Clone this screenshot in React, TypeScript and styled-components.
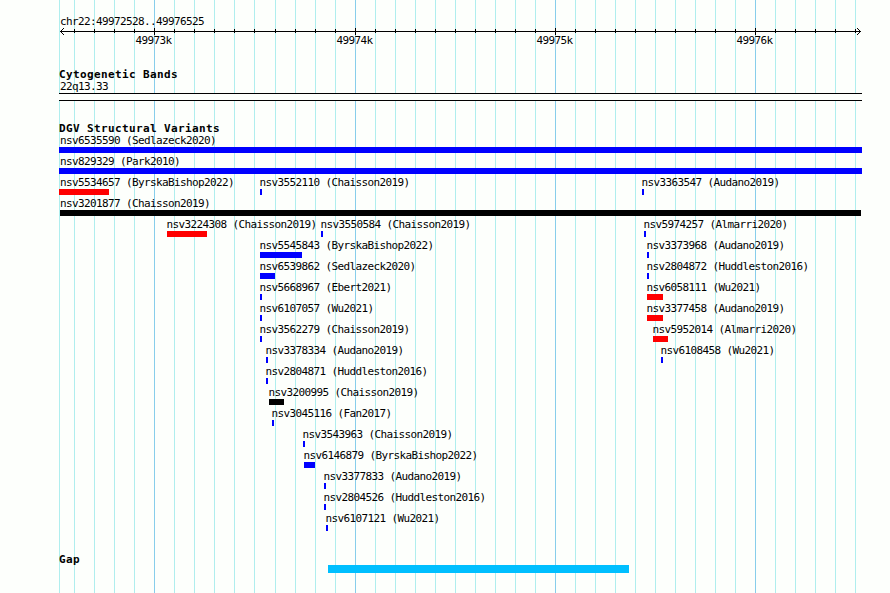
import { Fragment } from 'react';
import styled, { createGlobalStyle } from 'styled-components';

const LEFT = 59;
const WIDTH = 803;

const colors = {
    blue: '#0000ff',
    red: '#ff0000',
    black: '#000000',
    gap: '#00bfff',
};

type Feature = {
    name: string;
    start: number;
    width: number;
    color?: keyof typeof colors;
};

const rows: Feature[][] = [
    [{ name: 'nsv6535590 (Sedlazeck2020)', start: 59, width: 803 }],
    [{ name: 'nsv829329 (Park2010)', start: 59, width: 803 }],
    [
        { name: 'nsv5534657 (ByrskaBishop2022)', start: 59, width: 50, color: 'red' },
        { name: 'nsv3552110 (Chaisson2019)', start: 260, width: 2 },
        { name: 'nsv3363547 (Audano2019)', start: 642, width: 2 },
    ],
    [{ name: 'nsv3201877 (Chaisson2019)', start: 60, width: 801, color: 'black' }],
    [
        { name: 'nsv3224308 (Chaisson2019)', start: 167, width: 40, color: 'red' },
        { name: 'nsv3550584 (Chaisson2019)', start: 321, width: 2 },
        { name: 'nsv5974257 (Almarri2020)', start: 644, width: 2 },
    ],
    [
        { name: 'nsv5545843 (ByrskaBishop2022)', start: 260, width: 42 },
        { name: 'nsv3373968 (Audano2019)', start: 647, width: 2 },
    ],
    [
        { name: 'nsv6539862 (Sedlazeck2020)', start: 260, width: 15 },
        { name: 'nsv2804872 (Huddleston2016)', start: 647, width: 2 },
    ],
    [
        { name: 'nsv5668967 (Ebert2021)', start: 260, width: 2 },
        { name: 'nsv6058111 (Wu2021)', start: 647, width: 16, color: 'red' },
    ],
    [
        { name: 'nsv6107057 (Wu2021)', start: 260, width: 2 },
        { name: 'nsv3377458 (Audano2019)', start: 647, width: 16, color: 'red' },
    ],
    [
        { name: 'nsv3562279 (Chaisson2019)', start: 260, width: 2 },
        { name: 'nsv5952014 (Almarri2020)', start: 653, width: 15, color: 'red' },
    ],
    [
        { name: 'nsv3378334 (Audano2019)', start: 266, width: 2 },
        { name: 'nsv6108458 (Wu2021)', start: 661, width: 2 },
    ],
    [{ name: 'nsv2804871 (Huddleston2016)', start: 266, width: 2 }],
    [{ name: 'nsv3200995 (Chaisson2019)', start: 269, width: 15, color: 'black' }],
    [{ name: 'nsv3045116 (Fan2017)', start: 272, width: 2 }],
    [{ name: 'nsv3543963 (Chaisson2019)', start: 303, width: 2 }],
    [{ name: 'nsv6146879 (ByrskaBishop2022)', start: 304, width: 11 }],
    [{ name: 'nsv3377833 (Audano2019)', start: 324, width: 2 }],
    [{ name: 'nsv2804526 (Huddleston2016)', start: 324, width: 2 }],
    [{ name: 'nsv6107121 (Wu2021)', start: 326, width: 2 }],
];

const majorTicks = [
    { x: 154, label: '49973k' },
    { x: 355, label: '49974k' },
    { x: 555, label: '49975k' },
    { x: 755, label: '49976k' },
];

const ticks = [
    ...Array.from({ length: 10 }, (_, i) => 74 + i * 20),
    ...Array.from({ length: 30 }, (_, i) => 275 + i * 20),
];

const isMajor = (x: number) => majorTicks.some((tick) => tick.x === x);

const GlobalStyle = createGlobalStyle`
    body {
        margin: 0;
        background: #fdfffc;
        overflow: hidden;
    }
`;

const Browser = styled.main`
    position: relative;
    box-sizing: border-box;
    width: 890px;
    height: 593px;
    padding: 15px 28px 0 ${LEFT}px;
    overflow: hidden;
    background: #fdfffc;
    color: #000;
    font-family: 'DejaVu Sans Mono', 'Liberation Mono', monospace;
    font-size: 11px;
    line-height: 13px;
    letter-spacing: -0.622px;
    white-space: pre;
`;

const GridLines = styled.svg`
    position: absolute;
    inset: 0;
    shape-rendering: crispEdges;
`;

const Content = styled.div`
    position: relative;
    display: flex;
    flex-direction: column;
`;

const Region = styled.div`
    height: 13px;
    padding-left: 1px;
`;

const Axis = styled.svg`
    display: block;
    width: ${WIDTH}px;
    height: 7px;
    shape-rendering: crispEdges;
`;

const Lane = styled.div<{ $height: number }>`
    display: grid;
    height: ${(p) => p.$height}px;
`;

const TickLabel = styled.span<{ $x: number }>`
    grid-area: 1 / 1;
    margin: -1px 0 0 ${(p) => p.$x - LEFT - 18.5}px;
`;

const Track = styled.section<{ $before: number }>`
    margin-top: ${(p) => p.$before}px;
`;

const Title = styled.h2`
    height: 12px;
    margin: 0;
    font-size: 11px;
    line-height: 13px;
    font-weight: 700;
    letter-spacing: 0.378px;
`;

const BandName = styled.div`
    height: 13px;
    padding-left: 1px;
`;

const Band = styled.div`
    height: 6px;
    border: solid #000;
    border-width: 1px 0;
    background: #fdfffc;
`;

const FeatureItem = styled.div<{ $start: number }>`
    grid-area: 1 / 1;
    justify-self: start;
    margin-left: ${(p) => p.$start - LEFT}px;
`;

const FeatureName = styled.div<{ $shift: number }>`
    width: 0;
    height: 13px;
    text-indent: ${(p) => p.$shift}px;
`;

const Bar = styled.div<{ $width: number; $color: string; $height?: number }>`
    width: ${(p) => p.$width}px;
    height: ${(p) => p.$height ?? 6}px;
    background: ${(p) => p.$color};
`;

function Ruler() {
    return (
        <>
            <Region>chr22:49972528..49976525</Region>
            <Axis viewBox={`${LEFT} 28 ${WIDTH} 7`}>
                <rect x={60} y={31} width={801} height={1} />
                {ticks.map((x) => (
                    <rect key={x} x={x} y={isMajor(x) ? 28 : 29} width={1} height={isMajor(x) ? 7 : 4} />
                ))}
                {[1, 2, 3].map((d) => (
                    <Fragment key={d}>
                        <rect x={60 + d} y={31 - d} width={1} height={1} />
                        <rect x={60 + d} y={31 + d} width={1} height={1} />
                        <rect x={860 - d} y={31 - d} width={1} height={1} />
                        <rect x={860 - d} y={31 + d} width={1} height={1} />
                    </Fragment>
                ))}
            </Axis>
            <Lane $height={13}>
                {majorTicks.map((tick) => (
                    <TickLabel key={tick.x} $x={tick.x}>
                        {tick.label}
                    </TickLabel>
                ))}
            </Lane>
        </>
    );
}

export default function App() {
    return (
        <>
            <GlobalStyle />
            <Browser>
                <GridLines width={890} height={593}>
                    <rect x={LEFT} width={1} height={593} fill="#afeeee" />
                    {ticks.map((x) => (
                        <rect key={x} x={x} width={1} height={593} fill={isMajor(x) ? '#87ceeb' : '#afeeee'} />
                    ))}
                </GridLines>
                <Content>
                    <Ruler />
                    <Track $before={20}>
                        <Title>Cytogenetic Bands</Title>
                        <BandName>22q13.33</BandName>
                        <Band />
                    </Track>
                    <Track $before={21}>
                        <Title>DGV Structural Variants</Title>
                        {rows.map((row, i) => (
                            <Lane key={i} $height={21}>
                                {row.map((f) => (
                                    <FeatureItem key={f.name} $start={f.start}>
                                        <FeatureName $shift={Math.max(60 - f.start, -0.5)}>{f.name}</FeatureName>
                                        <Bar $width={f.width} $color={colors[f.color ?? 'blue']} />
                                    </FeatureItem>
                                ))}
                            </Lane>
                        ))}
                    </Track>
                    <Track $before={20}>
                        <Title>Gap</Title>
                        <FeatureItem $start={328}>
                            <Bar $width={301} $height={8} $color={colors.gap} />
                        </FeatureItem>
                    </Track>
                </Content>
            </Browser>
        </>
    );
}
